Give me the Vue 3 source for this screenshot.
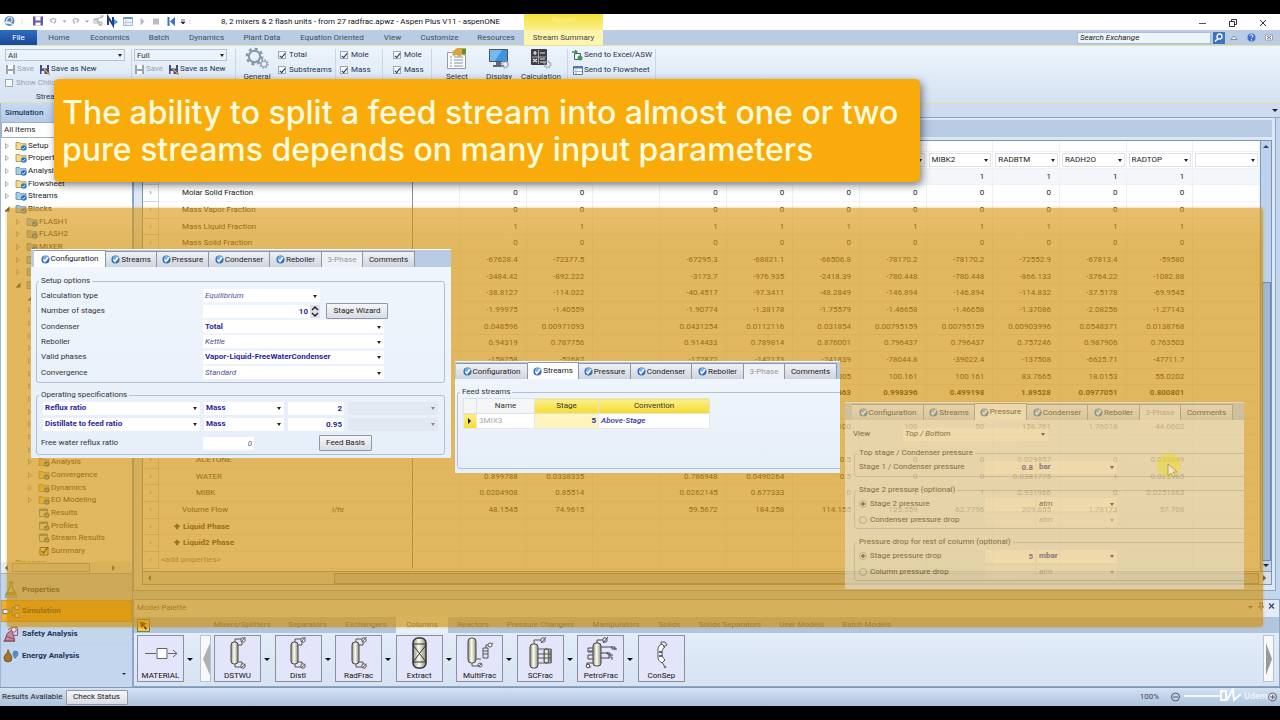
<script setup>
const ribbonTabs = ['Home', 'Economics', 'Batch', 'Dynamics', 'Plant Data', 'Equation Oriented', 'View', 'Customize', 'Resources', 'Stream Summary']

const tree = [
  { n: 'Setup', l: 0, x: 'c', i: 'folder' },
  { n: 'Properties', l: 0, x: 'c', i: 'folder' },
  { n: 'Analysis', l: 0, x: 'c', i: 'bluefolder' },
  { n: 'Flowsheet', l: 0, x: 'c', i: 'folder' },
  { n: 'Streams', l: 0, x: 'c', i: 'bluefolder' },
  { n: 'Blocks', l: 0, x: 'o', i: 'bluefolder' },
  { n: 'FLASH1', l: 1, x: 'c', i: 'bluefolder' },
  { n: 'FLASH2', l: 1, x: 'c', i: 'bluefolder' },
  { n: 'MIXER', l: 1, x: 'c', i: 'bluefolder' },
  { n: '', l: 1, x: 'c', i: 'bluefolder' },
  { n: '', l: 1, x: 'c', i: 'bluefolder' },
  { n: '', l: 1, x: 'o', i: 'bluefolder' },
  { n: '', l: 2, x: 'o', i: 'folder' },
  ...Array.from({ length: 12 }, () => ({ n: '', l: 2, x: 'c', i: 'folder' })),
  { n: 'Analysis', l: 2, x: 'c', i: 'folder' },
  { n: 'Convergence', l: 2, x: 'c', i: 'folder' },
  { n: 'Dynamics', l: 2, x: 'c', i: 'folder' },
  { n: 'EO Modeling', l: 2, x: 'c', i: 'folder' },
  { n: 'Results', l: 2, x: '', i: 'form' },
  { n: 'Profiles', l: 2, x: '', i: 'form' },
  { n: 'Stream Results', l: 2, x: '', i: 'form' },
  { n: 'Summary', l: 2, x: '', i: 'summary' },
  { n: 'Utilities', l: 0, x: '', i: 'folder' }
]

const nav = [
  { n: 'Properties', i: 'flask' },
  { n: 'Simulation', i: 'flow', on: true },
  { n: 'Safety Analysis', i: 'safety' },
  { n: 'Energy Analysis', i: 'energy' }
]

const streams = ['', '', '', '', '', '', '', 'MIBK2', 'RADBTM', 'RADH2O', 'RADTOP', '']
const same = v => [v, v, '', v, v, v, v, v, v, v, v, '']
const vals = s => {
  const v = s.split(' ')
  return [v[0], v[1], '', ...v.slice(2), '']
}
const late = s => ['', '', '', '', '', ...s.split(' '), '']
const rows = [
  { n: '', v: same('1'), tint: true },
  { n: 'Molar Solid Fraction', v: same('0') },
  { n: 'Mass Vapor Fraction', v: same('0') },
  { n: 'Mass Liquid Fraction', v: same('1') },
  { n: 'Mass Solid Fraction', v: same('0') },
  { n: '', v: vals('-67628.4 -72377.5 -67295.3 -68821.1 -66506.8 -78170.2 -78170.2 -72552.9 -67813.4 -59580') },
  { n: '', v: vals('-3484.42 -892.222 -3173.7 -976.935 -2418.39 -780.448 -780.448 -866.133 -3764.22 -1082.88') },
  { n: '', v: vals('-38.8127 -114.022 -40.4517 -97.3411 -48.2849 -146.894 -146.894 -114.832 -37.5178 -69.9545') },
  { n: '', v: vals('-1.99975 -1.40559 -1.90774 -1.38178 -1.75579 -1.46658 -1.46658 -1.37086 -2.08256 -1.27143') },
  { n: '', v: vals('0.048596 0.00971093 0.0431254 0.0112116 0.031854 0.00795159 0.00795159 0.00903996 0.0548371 0.0138768') },
  { n: '', v: vals('0.94319 0.787756 0.914433 0.789814 0.876001 0.796437 0.796437 0.757246 0.987906 0.763503') },
  { n: '', v: vals('-158258 -52687 -172872 -142173 -241839 -78044.8 -39022.4 -137508 -6625.71 -47711.7') },
  { n: '', v: late('005 100.161 100.161 83.7665 18.0153 55.0202') },
  { n: '', v: late('463 0.998396 0.499198 1.89528 0.0977051 0.800801'), bold: true },
  { n: '', v: [] },
  { n: '', v: late('100 100 50 158.761 1.76018 44.0602') },
  { n: '', v: [] },
  { n: 'ACETONE', sub: true, v: late('0.5 0 0 0.029857 0 0.033049') },
  { n: 'WATER', sub: true, v: vals('0.899788 0.0338335 0.786948 0.0490264 0.5 0 0 0.0381775 1 0.023965') },
  { n: 'MIBK', sub: true, v: vals('0.0204908 0.85514 0.0262145 0.677333 0 1 1 0.931966 0 0.0251863') },
  { n: 'Volume Flow', u: 'l/hr', v: vals('48.1545 74.9615 59.5672 184.258 114.155 125.559 62.7796 209.655 1.78173 57.708') },
  { n: 'Liquid Phase', plus: true, v: [] },
  { n: 'Liquid2 Phase', plus: true, v: [] },
  { n: '<add properties>', add: true, v: [] }
]

const formTabs = ['Configuration', 'Streams', 'Pressure', 'Condenser', 'Reboiler', '3-Phase', 'Comments']
const setup = [
  { n: 'Condenser', v: 'Total', b: true },
  { n: 'Reboiler', v: 'Kettle' },
  { n: 'Valid phases', v: 'Vapor-Liquid-FreeWaterCondenser', b: true },
  { n: 'Convergence', v: 'Standard' }
]
const specs = [
  { n: 'Reflux ratio', v: '2' },
  { n: 'Distillate to feed ratio', v: '0.95' }
]
const drops = [
  {
    t: 'Stage 2 pressure (optional)', g: 'stage2',
    r: [{ n: 'Stage 2 pressure', v: '', u: 'atm', on: true }, { n: 'Condenser pressure drop', v: '', u: 'atm' }]
  },
  {
    t: 'Pressure drop for rest of column (optional)', g: 'rest',
    r: [{ n: 'Stage pressure drop', v: '5', u: 'mbar', on: true, b: true }, { n: 'Column pressure drop', v: '', u: 'atm' }]
  }
]

const paletteTabs = ['Mixers/Splitters', 'Separators', 'Exchangers', 'Columns', 'Reactors', 'Pressure Changers', 'Manipulators', 'Solids', 'Solids Separators', 'User Models', 'Batch Models']
const models = ['DSTWU', 'Distl', 'RadFrac', 'Extract', 'MultiFrac', 'SCFrac', 'PetroFrac', 'ConSep']
</script>

<template>
  <div class="app">
    <svg class="defs" aria-hidden="true">
      <defs>
        <linearGradient id="steel"><stop offset="0" stop-color="#8f9080" /><stop offset=".45" stop-color="#fffff0" /><stop offset="1" stop-color="#8b8c7c" /></linearGradient>
      </defs>
      <symbol id="check" viewBox="0 0 10 10"><circle cx="5" cy="5" r="4.5" fill="#2f6fbd" /><circle cx="5" cy="3.6" r="2.8" fill="#78aee6" /><path d="M2.6 5 4.4 7.2 8 2.2" fill="none" stroke="#fff" stroke-width="1.6" /></symbol>
      <symbol id="folder" viewBox="0 0 12 10"><path d="M1 1.5h3.5l1 1.2H11V8.500H1z" fill="#f3d988" stroke="#a98f4c" stroke-width=".8" /><circle cx="8.800" cy="7" r="2.800" fill="#2b74c4" /><path d="M7.400 7l1 1.200 1.800-2.400" fill="none" stroke="#fff" stroke-width=".8" /></symbol>
      <symbol id="bluefolder" viewBox="0 0 12 10"><path d="M1 1.500h3.500l1 1.200H11V8.500H1z" fill="#a5cdea" stroke="#5f87a8" stroke-width=".8" /><circle cx="8.800" cy="7" r="2.800" fill="#2b74c4" /><path d="M7.400 7l1 1.200 1.800-2.400" fill="none" stroke="#fff" stroke-width=".8" /></symbol>
      <symbol id="form" viewBox="0 0 12 10"><path d="M1.500 1h8v7.500h-8z" fill="#eef5fb" stroke="#56789a" stroke-width=".8" /><path d="M1.500 2h8" stroke="#56789a" stroke-width="1.500" /><circle cx="8.800" cy="7" r="2.800" fill="#56789a" /><path d="M7.400 7l1 1.200 1.800-2.400" fill="none" stroke="#fff" stroke-width=".8" /></symbol>
      <symbol id="summary" viewBox="0 0 12 10"><path d="M2 1.500h8V9H2z" fill="#fff6b0" stroke="#4a4a20" /><path d="M3.500 5l2 2L10 1" fill="none" stroke="#222" stroke-width="1.300" /></symbol>
      <symbol id="disk" viewBox="0 0 11 11"><path d="M1 1h9v9H1z" fill="currentColor" /><path d="M3 1h5v4H3zM3 7h5v3H3z" fill="#fff" /></symbol>
      <symbol id="diskas" viewBox="0 0 11 11"><path d="M1 1h9v9H1z" fill="#46489c" /><path d="M3 1h5v3.500H3zM2.500 7h3v3h-3z" fill="#e8eefb" /><path d="M4 5l5 5 1.500.5-.5-1.500-5-5z" fill="#e8b43c" stroke="#6b4b12" stroke-width=".4" /></symbol>
      <symbol id="gear" viewBox="0 0 12 12"><circle cx="6" cy="6" r="3.600" fill="none" stroke="currentColor" stroke-width="1.200" /><circle cx="6" cy="6" r="4.900" fill="none" stroke="currentColor" stroke-width="1.400" stroke-dasharray="1.900 1.950" /></symbol>
      <symbol id="flask" viewBox="0 0 14 16"><path d="M5 1h4M6 1v5L2 13h10L8 6V1" fill="#cfe6c6" stroke="#6a7a5a" /><path d="M3.500 10h7l1.500 3H2z" fill="#86a860" /><path d="M1 15h12" stroke="#7b8a9a" /></symbol>
      <symbol id="flow" viewBox="0 0 18 16"><path d="M1 6h6v4H1zM13 2h4v4h-4zM13 10h4v4h-4z" fill="#f4f4f4" stroke="#777" /><path d="M7 8h3V4h3M10 8v4h3" fill="none" stroke="#777" /></symbol>
      <symbol id="safety" viewBox="0 0 18 18"><path d="M5 9l5-4 1 4 2 8H2z" fill="#c58b9a" stroke="#7a4257" /><path d="M6 5l5-3h4l1 2v7h-4M4 12l8 3M1 17h12" fill="none" stroke="#8a4a60" /><circle cx="12" cy="5" r="2.500" fill="#f3e6ea" stroke="#8a4a60" stroke-width=".8" /></symbol>
      <symbol id="energy" viewBox="0 0 18 16"><path d="M6 2c1 4 4 5 4 8.500a4 4 0 0 1-8 0C2 7 6 6 6 2z" fill="#a87326" stroke="#4c3a1a" stroke-width=".6" /><path d="M13 13c-1-3-3-4-3-7a3.500 3.500 0 0 1 7 0c0 3-3 4-4 7z" fill="#4d8fc8" stroke="#fff" stroke-width=".6" /></symbol>
      <symbol id="still" viewBox="0 0 30 34">
        <rect x="8" y="6" width="7" height="22" rx="3" fill="url(#steel)" stroke="#444" />
        <path d="M12 6V3h7M19 3v6h-4M12 28v3h7M15 26h4v3" fill="none" stroke="#555" />
        <circle cx="20" cy="4" r="2.200" fill="#fff" stroke="#555" /><circle cx="20" cy="30" r="2.200" fill="#fff" stroke="#555" /><path d="M18 6l4.500-5M18 32l4.500-4" stroke="#555" />
      </symbol>
      <symbol id="DSTWU" viewBox="0 0 30 34"><use href="#still" /></symbol>
      <symbol id="Distl" viewBox="0 0 30 34"><use href="#still" /></symbol>
      <symbol id="RadFrac" viewBox="0 0 30 34"><use href="#still" /></symbol>
      <symbol id="Extract" viewBox="0 0 30 34"><rect x="9" y="2" width="13" height="30" rx="5" fill="url(#steel)" stroke="#333" stroke-width="1.500" /><path d="M9 8h13M9 26h13M9 9l13 17M22 9L9 26" fill="none" stroke="#333" /></symbol>
      <symbol id="MultiFrac" viewBox="0 0 30 34"><rect x="3" y="2" width="8" height="25" rx="3.500" fill="url(#steel)" stroke="#444" /><path d="M7 27v3h6M11 23h5M18 12h5v10h-5zM18 15h5M18 18h5M21 12V9h4l3-2" fill="none" stroke="#555" /><circle cx="25" cy="9" r="2" fill="#fff" stroke="#555" /><circle cx="15" cy="29" r="2" fill="#fff" stroke="#555" /><path d="M13 31l4-4" stroke="#555" /></symbol>
      <symbol id="SCFrac" viewBox="0 0 30 34"><rect x="5" y="8" width="8" height="24" rx="3" fill="url(#steel)" stroke="#444" /><rect x="19" y="13" width="5" height="14" rx="2" fill="url(#steel)" stroke="#444" /><path d="M9 8V4h8M13 13h13v14H13M13 18h13M13 22h13M26 13v14" fill="none" stroke="#555" /><circle cx="18" cy="4" r="2.200" fill="#fff" stroke="#555" /><path d="M16 7l5-6" stroke="#555" /></symbol>
      <symbol id="PetroFrac" viewBox="0 0 34 34"><rect x="9" y="7" width="8" height="23" rx="3" fill="url(#steel)" stroke="#444" /><path d="M13 7V4h8M17 11h11v2h5M17 17h7v2h5M17 22h9M9 12H4v4h5M9 19H4v4h5M9 27H3v4h4M9 15H5" fill="none" stroke="#444" /><circle cx="21" cy="4" r="2.200" fill="#fff" stroke="#444" /><path d="M19 7l5-6M27 11h4v3M22 17h4v3M24 21h4v3" fill="none" stroke="#444" /><circle cx="4" cy="30" r="1.800" fill="#fff" stroke="#444" /></symbol>
      <symbol id="ConSep" viewBox="0 0 30 34"><path d="M12 13c0-3 2-4 4-5l3 3c-2 1-3 3-3 6s1 5 3 7l-3 3c-3-2-4-3-4-6z" fill="#fff" stroke="#555" /><path d="M15 9V6h4l2 3-4 2M16 26l3 5" fill="none" stroke="#555" /><path d="M13 16h3M13 20h3" stroke="#336" stroke-width="1.500" /><circle cx="19" cy="31" r="1.300" fill="#777" /></symbol>
    </svg>

    <header class="titlebar">
      <svg class="qat" width="221" height="16" viewBox="0 0 221 16">
        <circle cx="9.500" cy="7" r="5" fill="#5b86b4" /><path d="M6 10c0-4 2-7 4-7s3 4 1 5-3-1-5 0 6 1 8 3" fill="none" stroke="#e8f1fa" stroke-width="1.200" />
        <path d="M22 5v5M190 5v5" stroke="#ddd" />
        <path d="M33 2.500h10v9H33z" fill="#6b5aa6" /><path d="M35.500 2.500h5v4h-5zM35.500 8.500h5v3h-5z" fill="#fff" />
        <path d="M50 6l2.500 2.500M50 6l3-1.500c3 0 4 2 1 5M79 6l-2.500 2.500M79 6l-3-1.500c-3 0-4 2-1 5" fill="none" stroke="#aaa" stroke-width="1.200" />
        <path d="M62.500 6.500h4l-2 2zM85 6.500h4l-2 2z" fill="#999" />
        <path d="M95 6l4-2 4-1M95 6l5 3v3M94 5h4v4h-4zM100 2h4M99 8h3v3h-3z" fill="none" stroke="#aaa" />
        <path d="M108 11V3l5 8V3" fill="none" stroke="#1d3f8a" stroke-width="2" /><path d="M114 5l4 3-4 3z" fill="#3ba0dc" />
        <path d="M123.500 3.500h9v8h-9z" fill="#eef4fb" stroke="#9ab4d2" /><path d="M123.500 4h9" stroke="#6e95c4" stroke-width="2" /><path d="M126 6v5M123.500 8.500h9" stroke="#b4c8de" />
        <path d="M140.500 3.500l4 4-4 4z" fill="#bcbcbc" /><path d="M153 4.500h6v6h-6z" fill="#bcbcbc" />
        <path d="M168.500 3v9" stroke="#3d74ba" stroke-width="2" /><path d="M175 3v9l-5-4.500z" fill="#3d74ba" />
        <path d="M181 6h4M181 8h4l-2 2z" fill="#222" stroke="#222" stroke-width=".7" />
      </svg>
      <h1>8, 2 mixers &amp; 2 flash units - from 27 radfrac.apwz - Aspen Plus V11 - aspenONE</h1>
      <span class="context">Report</span>
      <div class="winbtns">
        <button aria-label="Minimize"><svg width="8" height="8"><path d="M0 4.500h7" stroke="#555" /></svg></button>
        <button aria-label="Restore"><svg width="8" height="8"><path d="M.5 2.500h5v5h-5zM2.500 2V.5h5v5H6" fill="none" stroke="#333" /></svg></button>
        <button aria-label="Close"><svg width="8" height="8"><path d="M1 1l6 6M7 1L1 7" stroke="#333" /></svg></button>
      </div>
    </header>

    <nav class="ribbontabs">
      <button class="file">File</button>
      <button v-for="t in ribbonTabs" :key="t" :class="{ active: t === 'Stream Summary' }">{{ t }}</button>
      <div class="search">
        <input type="text" value="Search Exchange" aria-label="Search Exchange">
        <button aria-label="Search" class="find"><svg width="11" height="11"><circle cx="6.500" cy="4.500" r="2.500" fill="none" stroke="#fff" stroke-width="1.300" /><path d="M5 6.500L2 9.500" stroke="#fff" stroke-width="1.500" /></svg></button>
        <svg width="46" height="11"><path d="M4 7.500l3-3.500 3 3.500z" fill="#fff" stroke="#668" stroke-width=".7" /><circle cx="24.500" cy="5.500" r="4" fill="#3f6fd0" /><path d="M23 4c0-2 3.500-1.500 3 .5l-1.500 1.300M24.500 7.300v1.200" fill="none" stroke="#fff" /><path d="M38.500 3h7v5h-7z" fill="#fff" stroke="#889" stroke-width=".7" /><path d="M40 4l4 3M44 4l-4 3" stroke="#667" /></svg>
      </div>
    </nav>

    <section class="ribbon">
      <div class="group g1">
        <span class="combo"><select aria-label="Template"><option>All</option></select></span>
        <div class="line"><button class="dim"><svg class="ic"><use href="#disk" /></svg>Save</button><button><svg class="ic"><use href="#diskas" /></svg>Save as New</button></div>
        <label class="dim chk"><input type="checkbox">Show Child</label>
        <span class="caption">Stream</span>
      </div>
      <div class="group g2">
        <span class="combo"><select aria-label="Columns"><option>Full</option></select></span>
        <div class="line"><button class="dim"><svg class="ic"><use href="#disk" /></svg>Save</button><button><svg class="ic"><use href="#diskas" /></svg>Save as New</button></div>
      </div>
      <div class="group g3">
        <button class="big"><svg width="26" height="24" color="#8493a8"><use href="#gear" x="1" y="0" width="19" height="19" /><use href="#gear" x="15" y="12" width="10" height="10" /></svg>General</button>
        <div class="checks"><label class="chk"><input type="checkbox" checked>Total</label><label class="chk"><input type="checkbox" checked>Substreams</label></div>
      </div>
      <div class="group g4"><label class="chk"><input type="checkbox" checked>Mole</label><label class="chk"><input type="checkbox" checked>Mass</label></div>
      <div class="group g5"><label class="chk"><input type="checkbox" checked>Mole</label><label class="chk"><input type="checkbox" checked>Mass</label></div>
      <div class="group g6">
        <button class="big"><svg width="24" height="24"><path d="M2.500 5.500h18v16h-18z" fill="#fbfcfe" stroke="#99a" /><path d="M5 10h2M9 10h9M5 13h2M9 13h9M5 16h2M9 16h9M5 19h2M9 19h9" stroke="#7d93b8" /><path d="M7 5l5-4h9v8l-4-1-3 2-2-2-4 1z" fill="#d9a441" /><path d="M17 2h4v5h-4z" fill="#4d9a43" /></svg>Select</button>
        <button class="big"><svg width="24" height="24"><path d="M2.500 2.500h18v12h-18z" fill="#3f93e0" stroke="#456" /><path d="M3 3h12l-7 11H3z" fill="#74b9f2" /><path d="M9 15h5v3H9zM6 18h11v2H6z" fill="#667" /><g color="#9aa4b2"><use href="#gear" x="13" y="13" width="10" height="9" /></g></svg>Display</button>
        <button class="big"><svg width="24" height="24"><rect x="2" y="2" width="16" height="16" rx="1" fill="#3c3c44" /><path d="M4 6h4M6 4v4M11 6h5M4 12l4 3M8 12l-4 3M11 12h5M11 15h5" stroke="#eee" stroke-width="1.200" /><path d="M9.500 3v14M3 10h14" stroke="#aaa" /><g color="#9aa4b2"><use href="#gear" x="14" y="13" width="9" height="9" /></g></svg>Calculation</button>
      </div>
      <div class="group g7">
        <button><svg width="11" height="11"><path d="M2.500 3.500h6v6h-6z" fill="#eef4fb" stroke="#557" /><path d="M0 2h5M3 0l2 2-2 2" fill="none" stroke="#3a8f45" stroke-width="1.300" /><circle cx="8" cy="8" r="2.500" fill="#3a9a55" /></svg>Send to Excel/ASW</button>
        <button><svg width="11" height="11"><path d="M1.500 1.500h9v8h-9z" fill="#fff" stroke="#5577b0" /><path d="M1 2.500h10" stroke="#5577b0" stroke-width="2" /><path d="M4 3v6M1 6.500h9" stroke="#9db4d8" /></svg>Send to Flowsheet</button>
      </div>
    </section>

    <main class="work">
      <aside class="side">
        <h2>Simulation</h2>
        <div class="allitems">All Items</div>
        <div class="treeview">
          <ul class="tree">
            <li v-for="(t, k) in tree" :key="k" :class="'lv' + t.l">
              <svg class="exp" viewBox="0 0 6 8"><path v-if="t.x === 'c'" d="M1.500 1.500v5l3-2.500z" fill="none" stroke="#999" stroke-width=".8" /><path v-if="t.x === 'o'" d="M5.500 1.500v5h-5z" fill="#333" /></svg>
              <svg class="ti"><use :href="'#' + t.i" /></svg>{{ t.n }}
            </li>
          </ul>
        </div>
        <div class="hbar"><i class="arr l"></i><i class="thumb"></i><i class="arr r"></i></div>
        <button v-for="n in nav" :key="n.n" class="navbtn" :class="{ on: n.on }"><svg width="18" height="17"><use :href="'#' + n.i" /></svg>{{ n.n }}</button>
        <div class="more"><i class="down"></i></div>
      </aside>

      <div class="content">
        <div class="docstrip"><i class="down"></i></div>
        <div class="frame">
          <div class="band"></div>
          <div class="gridbox">
            <div class="gridwrap">
              <table class="grid">
                <colgroup><col class="c0"><col class="c1"><col class="c2"><col class="c3"><col v-for="(s, k) in streams" :key="k"></colgroup>
                <thead>
                  <tr class="h1"><th v-for="k in 16" :key="k"></th></tr>
                  <tr class="h2"><th></th><th></th><th></th><th></th><th v-for="(s, k) in streams" :key="k"><span class="combo"><select :aria-label="'Stream ' + (k + 1)"><option>{{ s }}</option></select></span></th></tr>
                </thead>
                <tbody>
                  <tr v-for="(r, k) in rows" :key="k" :class="{ bold: r.bold, tint: r.tint }">
                    <th class="rh">›</th>
                    <td class="nm" :class="{ sub: r.sub, plus: r.plus, add: r.add }">{{ r.n }}</td>
                    <td class="un">{{ r.u }}</td>
                    <td></td>
                    <td v-for="(s, c) in streams" :key="c" class="num">{{ r.v[c] }}</td>
                  </tr>
                </tbody>
              </table>
              <div class="vbar"><i class="up"></i><i class="thumb"></i><i class="down"></i></div>
            </div>
            <div class="ghbar"><i class="arr l"></i><i class="gap"></i><i class="thumb"></i><i class="arr r"></i></div>
          </div>
        </div>

        <section class="palette">
          <div class="ptitle"><span>Model Palette</span><svg width="30" height="9"><path d="M2 4h5l-2.500 3z" fill="#567" /><path d="M13 1h4M14 1v4M16.500 1v4M12 5h6M15 5v3" stroke="#567" /><path d="M23 1.500l5 5M28 1.500l-5 5" stroke="#447" stroke-width="1.300" /></svg></div>
          <div class="ptabs">
            <button class="pick" aria-label="Pick"><svg width="11" height="11"><path d="M2 1.500l6.500 2-2.500 1.500 3 3.500-1.500 1L5 6 3.500 8z" fill="#222" stroke="#e33" stroke-width=".3" /></svg></button>
            <div class="tabcols"><button v-for="t in paletteTabs" :key="t" :class="{ on: t === 'Columns' }">{{ t }}</button></div>
          </div>
          <div class="models">
            <button class="model"><svg width="38" height="34"><path d="M3 17.500h11M26 17.500h9M31 14l4 3.500-4 3.500" fill="none" stroke="#666" /><path d="M15 12.500h10v10H15z" fill="#fff" stroke="#666" /></svg>MATERIAL</button>
            <i class="down big1"></i>
            <button class="scroll" aria-label="Scroll left"><svg width="8" height="32"><path d="M8 0v32L1 16z" fill="#b0b0b0" /></svg></button>
            <div class="items">
              <div v-for="(m, k) in models" :key="m" class="item"><button class="model"><svg width="34" height="34"><use :href="'#' + m" /></svg>{{ m }}</button><i v-if="k < 7" class="down"></i></div>
            </div>
            <button class="scroll end" aria-label="Scroll right"><svg width="8" height="32"><path d="M1 0v32l6-16z" fill="#999" /></svg></button>
          </div>
        </section>
      </div>
    </main>

    <footer class="status">
      <span>Results Available</span><button class="btn">Check Status</button>
      <span class="pct">100%</span>
      <svg width="113" height="18">
        <circle cx="8.500" cy="9" r="4" fill="none" stroke="#556" /><path d="M6 9h5" stroke="#556" />
        <path d="M17 8h37" stroke="#fff" stroke-width="1.500" />
        <path d="M54 3h5v9h-5zM60 12l6-11 1 11 7-6" fill="none" stroke="#fff" stroke-width="2" opacity=".9" />
        <text x="77" y="11" fill="#fff" font-size="9" font-weight="bold" opacity=".7">Udemy</text>
        <circle cx="105.500" cy="9" r="4" fill="none" stroke="#667" /><path d="M103 9h5M105.500 7v4" stroke="#667" />
      </svg>
    </footer>

    <div class="veil"></div>

    <section class="form f1">
      <div class="ftabs"><button v-for="(t, k) in formTabs" :key="t" :class="{ on: k === 0, off: k === 5 }"><svg v-if="k < 5" width="9" height="9"><use href="#check" /></svg>{{ t }}</button></div>
      <fieldset class="fs setup">
        <legend>Setup options</legend>
        <div class="row"><label for="ct">Calculation type</label><span class="combo w1"><select id="ct"><option>Equilibrium</option></select></span></div>
        <div class="row"><label for="ns">Number of stages</label><span class="w1 spin"><input id="ns" class="b" type="text" value="10"><svg width="10" height="13"><path d="M2 5l3-3 3 3M2 8l3 3 3-3" fill="none" stroke="#223" stroke-width="1.500" /></svg></span><button class="btn wiz">Stage Wizard</button></div>
        <div v-for="s in setup" :key="s.n" class="row"><label :for="s.n">{{ s.n }}</label><span class="combo w2"><select :id="s.n" :class="{ b: s.b }"><option>{{ s.v }}</option></select></span></div>
      </fieldset>
      <fieldset class="fs oper">
        <legend>Operating specifications</legend>
        <div v-for="s in specs" :key="s.n" class="srow">
          <span class="combo"><select class="b" aria-label="Specification"><option>{{ s.n }}</option></select></span>
          <span class="combo"><select class="b" aria-label="Basis"><option>Mass</option></select></span>
          <input class="b" type="text" :value="s.v" :aria-label="s.n">
          <span class="combo dis"><select disabled aria-label="Units"><option></option></select></span>
        </div>
        <div class="row last"><label for="fw">Free water reflux ratio</label><input id="fw" class="w0" type="text" value="0"><button class="btn">Feed Basis</button></div>
      </fieldset>
    </section>

    <section class="form f2">
      <div class="ftabs"><button v-for="(t, k) in formTabs" :key="t" :class="{ on: k === 1, off: k === 5 }"><svg v-if="k < 5" width="9" height="9"><use href="#check" /></svg>{{ t }}</button></div>
      <fieldset class="fs feed">
        <legend>Feed streams</legend>
        <table>
          <thead><tr><th class="t0"></th><th class="t1">Name</th><th class="t2 y">Stage</th><th class="t3 y">Convention</th></tr></thead>
          <tbody><tr><td class="y mark"><i class="play"></i></td><td class="gray">3MIX3</td><td class="stage">5</td><td class="conv">Above-Stage</td></tr></tbody>
        </table>
      </fieldset>
    </section>

    <section class="form f3">
      <div class="ftabs"><button v-for="(t, k) in formTabs" :key="t" :class="{ on: k === 2, off: k === 5 }"><svg v-if="k < 5" width="9" height="9"><use href="#check" /></svg>{{ t }}</button></div>
      <div class="view"><label for="vw">View</label><span class="combo"><select id="vw"><option>Top / Bottom</option></select></span></div>
      <fieldset class="fs top">
        <legend>Top stage / Condenser pressure</legend>
        <div class="prow"><label for="s1">Stage 1 / Condenser pressure</label><input id="s1" class="b" type="text" value="0.8"><span class="combo"><select class="b" aria-label="Pressure units"><option>bar</option></select></span></div>
      </fieldset>
      <fieldset v-for="d in drops" :key="d.g" class="fs">
        <legend>{{ d.t }}</legend>
        <div v-for="r in d.r" :key="r.n" class="prow" :class="{ faint: !r.on }"><label><input type="radio" :name="d.g" :checked="r.on">{{ r.n }}</label><input class="b" type="text" :value="r.v" :aria-label="r.n"><span class="combo"><select :class="{ b: r.b }" :aria-label="r.n + ' units'"><option>{{ r.u }}</option></select></span></div>
      </fieldset>
    </section>

    <svg class="cursor" width="30" height="30"><circle cx="13" cy="13" r="12" fill="#f2dc1c" opacity=".5" /><path d="M12 12v12l3-3 2 4 2-1-2-4h4z" fill="#f4ecc8" stroke="#a08c50" stroke-width=".8" /></svg>

    <div class="callout">The ability to split a feed stream into almost one or two<br>pure streams depends on many input parameters</div>
  </div>
</template>

<style>
body { background: #000; }
</style>

<style scoped>
* { box-sizing: border-box; }
.app { position: relative; display: flex; flex-direction: column; min-height: 100vh; padding: 14px 0; background: #000; font: 8px/12px Roboto, "Noto Sans", sans-serif; color: #222; overflow: hidden; }
.defs { position: absolute; width: 0; height: 0; }
svg { flex: none; display: block; }
button, input, select { font: inherit; color: inherit; margin: 0; padding: 0; border: 0; border-radius: 0; background: none; outline: 0; white-space: nowrap; min-width: 0; }
h1, h2, ul { margin: 0; padding: 0; font: inherit; list-style: none; }
i { flex: none; display: block; }
.up, .down, .arr, .play { width: 0; height: 0; border: 3px solid transparent; }
.down { border-top-color: #223; border-bottom: 0; }
.up { border-bottom-color: #345; border-top: 0; }
.arr.l { border-right-color: #555; border-left: 0; }
.arr.r, .play { border-left-color: #555; border-right: 0; }
.combo { position: relative; display: flex; }
.combo select { width: 100%; appearance: none; padding: 0 10px 0 2px; }
.combo::after { content: ""; position: absolute; right: 3px; top: 50%; margin-top: -1px; border: 2px solid transparent; border-top: 3px solid #222; border-bottom: 0; pointer-events: none; }

.titlebar { display: flex; height: 16px; background: #fff; }
.qat { width: 221px; }
.qat + h1 { width: 303px; line-height: 16px; font-size: 8px; color: #111; white-space: nowrap; }
.context { width: 79px; text-align: center; background: linear-gradient(#f6e23a, #fbef8a); color: #fbee90; }
.winbtns { margin-left: auto; display: flex; gap: 22px; padding: 5px 13px 0 0; }
.winbtns button { width: 8px; height: 8px; }

.ribbontabs { display: grid; grid-template-columns: 37px 44px 58px 40px 55px 56px 84px 37px 57px 56px 79px 1fr; height: 16px; background: #bacce4; border-bottom: 1px solid #e6e3a0; color: #444b5c; }
.ribbontabs .file { background: linear-gradient(#2f6dbd, #17479b); color: #fff; }
.ribbontabs .active { background: #fdf4ad; color: #444; }
.search { display: flex; gap: 2px; justify-content: flex-end; align-items: center; padding-right: 7px; }
.search input { width: 134px; height: 12px; padding: 0 2px; background: #eef4fb; border: 1px solid #a9bedb; font-style: italic; color: #222; }
.find { width: 12px; height: 12px; background: #3b75bd; }

.ribbon { display: flex; height: 57px; padding-top: 3px; background: linear-gradient(#edf4fc, #d5e2f2); border-bottom: 1px solid #e6e3a0; color: #26354d; }
.group { display: flex; flex-direction: column; gap: 2px; border-right: 1px solid #c9d6e6; }
.group > .combo select { height: 12px; border: 1px solid #b4c2d4; background: #eaf2fb; color: #333; }
.g1 { width: 132px; padding: 0 6px 0 5px; }
.g2 { width: 104px; padding: 0 8px 0 2px; }
.line { display: flex; gap: 5px; }
.line button { display: flex; align-items: center; gap: 1px; height: 12px; }
.line .dim, .dim { color: #9aa4b2; }
.ic { width: 11px; height: 11px; }
.chk { display: flex; align-items: center; gap: 3px; height: 12px; }
.chk input { appearance: none; width: 8px; height: 8px; border: 1px solid #9aa8b8; background: #f6f9fc; display: flex; justify-content: center; }
.chk input:checked::after { content: ""; width: 2px; height: 5px; border: solid #234; border-width: 0 1px 1px 0; rotate: 40deg; }
.caption { padding-left: 31px; white-space: nowrap; overflow: hidden; }
.group.g3 { width: 100px; flex-direction: row; padding-left: 7px; gap: 7px; }
.checks { display: flex; flex-direction: column; gap: 3px; }
.g4, .g5, .g7 { gap: 3px; }
.g4 { width: 47px; padding-left: 4px; }
.g5 { width: 49px; padding-left: 10px; }
.group.g6 { width: 136px; flex-direction: row; gap: 0; padding-left: 4px; }
.big { display: flex; flex-direction: column; align-items: center; height: 38px; margin-top: -2px; }
.g3 .big { width: 28px; }
.g6 .big { width: 42px; }
.g7 { width: 88px; padding-left: 4px; }
.g7 button { display: flex; align-items: center; gap: 1px; height: 12px; }

.work { flex: 1; display: flex; background: #c4d6ee; }
.side { width: 133px; flex: none; display: flex; flex-direction: column; border-left: 1px solid #9fb4cf; border-right: 1px solid #8ea6c4; }
.side h2 { height: 19px; padding: 4px 0 0 4px; font-weight: 500; color: #1f365c; background: linear-gradient(#c7daf2, #b4cae6); }
.allitems { height: 16px; padding: 1px 2px; background: #fff; border: 1px solid #9db0c8; }
.treeview { flex: 1 1 0px; min-height: 0; overflow: hidden; background: #fff; }
.tree { padding-top: 1px; }
.tree li { display: flex; align-items: center; height: 13px; line-height: 12px; white-space: nowrap; color: #222; }
.tree li:nth-child(3n+2) { height: 12px; }
.exp { width: 6px; height: 8px; margin-right: 5px; }
.ti { width: 12px; height: 10px; margin-right: 1px; }
.lv0 { padding-left: 3px; }
.lv1 { padding-left: 14px; }
.lv2 { padding-left: 26px; }
.hbar { display: flex; align-items: center; height: 12px; margin-bottom: 4px; padding: 0 4px; background: #e8edf4; border-bottom: 1px solid #9db0c8; }
.hbar .thumb { width: 78px; height: 9px; margin: 0 22px 0 4px; background: #dde4ee; border: 1px solid #99a6b8; }
.navbtn { display: flex; align-items: center; gap: 2px; height: 22px; padding-left: 1px; font-weight: 700; color: #1c3157; border-top: 1px solid #c0d2ea; }
.navbtn.on { background: #f7ae2a; border: 1px solid #c99b42; padding-left: 0; color: #333; }
.more { height: 21px; padding: 7px 0 0 121px; }
.more .down { border-width: 2px; border-bottom: 0; }

.content { flex: 1; min-width: 0; display: flex; flex-direction: column; }
.docstrip { height: 15px; display: flex; align-items: center; justify-content: flex-end; padding-right: 2px; background: #cfdcef; border-bottom: 1px solid #8ea6c4; }
.frame { flex: 1; display: flex; flex-direction: column; margin-right: 4px; padding: 2px 3px 3px 4px; border: 1px solid #8ea6c4; border-top: 0; background: #dce8f6; }
.band { height: 17px; background: #b9cbe4; }
.gridbox { flex: 1; margin: 3px 0 2px 4px; border: 1px solid #8094ae; background: #fff; display: flex; flex-direction: column; }
.gridwrap { flex: 1; display: flex; }
.grid { flex: 1; min-width: 0; width: 0; align-self: flex-start; table-layout: fixed; border-collapse: separate; border-spacing: 0; line-height: 12px; }
.c0 { width: 16px; }
.c1 { width: 173px; }
.c2 { width: 81px; }
.c3 { width: 47px; }
.grid th, .grid td { padding: 0; font-weight: 400; border-right: 1px solid #edf0f4; border-bottom: 1px solid #f0f2f5; white-space: nowrap; overflow: hidden; }
.grid td:nth-child(2) { border-right: 0; }
.grid td:nth-child(3) { border-right-color: #889; }
.h1 { height: 11px; }
.h2 { height: 17px; }
.h2 .combo { margin: 0 1px 0 2px; }
.h2 select { height: 14px; border: 1px solid #dde2e8; color: #222; }
.grid tbody tr { height: 17px; }
.grid tbody tr:nth-child(3n+1) { height: 16px; }
.grid .rh { color: #777; border-color: #cfd6df; }
.tint { background: #f2f7fc; }
.grid .nm { padding-left: 23px; text-align: left; }
.grid .nm.sub { padding-left: 37px; }
.grid .nm.plus { padding-left: 15px; font-weight: 700; }
.plus::before { content: "✚"; margin-right: 3px; font-size: 7px; }
.grid .nm.add { padding-left: 2px; color: #777; }
.un { padding-left: 2px; text-align: left; }
.grid .num { padding-right: 8px; text-align: right; }
.grid .bold td { font-weight: 700; }
.vbar { width: 11px; flex: none; display: flex; flex-direction: column; align-items: center; padding: 4px 0; background: #bdd2ec; border-left: 1px solid #7f9abc; }
.vbar .thumb { width: 9px; flex: 1; margin: 134px 0 3px; background: #9fb8da; border: 1px solid #6d88ad; }
.ghbar { height: 13px; display: flex; align-items: center; padding: 0 5px; background: #d6dfea; border-top: 1px solid #8c9cb0; }
.ghbar .gap { width: 183px; }
.ghbar .thumb { flex: 1; height: 11px; margin-right: 4px; background: #c0cad8; border: 1px solid #8393a8; }

.palette { margin-top: 8px; border: 1px solid #8ea6c4; background: linear-gradient(#e9f2fc, #d6e3f2); display: flex; flex-direction: column; color: #4a5568; }
.ptitle { display: flex; justify-content: space-between; height: 17px; padding: 2px 3px 0; background: #e2ebf7; }
.ptabs { display: flex; height: 16px; background: #b3c4de; }
.pick { width: 13px; height: 13px; margin: 2px 55px 0 3px; background: #f3c84e; border: 1px solid #5a8c46; }
.tabcols { display: grid; grid-template-columns: 74px 57px 60px 52px 50px 85px 66px 41px 80px 63px 67px; }
.tabcols .on { background: #e9f0f9; }
.models { display: flex; height: 53px; padding: 2px 3px; }
.model { display: flex; flex-direction: column; align-items: center; justify-content: space-between; width: 47px; height: 47px; overflow: hidden; border: 1px solid #8a909c; background: #e3e6fa; color: #111; }
.models > .down, .item .down { align-self: center; margin-left: 3px; border-top-color: #111; }
.scroll { width: 11px; height: 47px; margin: 0 3px 0 7px; padding-left: 1px; background: #f6f8fb; border: 1px solid #b9c3cf; }
.items { flex: 0 0 471px; display: flex; justify-content: space-between; }
.item { width: 47px; display: flex; }
.item .model { flex: none; }
.scroll.end { margin: 0 2px 0 auto; }

.status { display: flex; align-items: center; height: 19px; padding-left: 2px; background: linear-gradient(#d3e2f3, #adc2db); border-top: 1px solid #7f98b8; }
.status .btn { width: 62px; margin-left: 3px; height: 15px; }
.btn { height: 16px; border: 1px solid #8d99a8; border-radius: 1px; background: linear-gradient(#f6f7f9, #d9dce2); color: #222; }
.pct { margin-left: auto; padding-right: 8px; color: #445; }

.veil { position: absolute; left: 7px; right: 17px; top: 208px; bottom: 93px; border-radius: 3px; background: linear-gradient(rgba(217, 152, 18, .62), rgba(209, 146, 11, .66) 10%); box-shadow: 0 0 3px rgba(209, 146, 11, .6); }

.form { position: absolute; background: linear-gradient(#f1f6fd, #e6eef9); color: #333; overflow: hidden; border-top: 1px solid #f6f8fb; }
.ftabs { display: grid; grid-template-columns: 72px 51px 52px 61px 52px 41px 52px; height: 17px; background: #b9cbe4; padding-left: 3px; }
.f2 .ftabs { padding-left: 1px; }
.ftabs button { display: flex; align-items: center; justify-content: center; gap: 1px; margin-top: 1px; border: 1px solid #8c96a6; border-width: 1px 1px 0 0; background: linear-gradient(#f0f1f5, #cfd4df); color: #222; }
.ftabs .on { background: #fbfdff; margin-top: 0; }
.ftabs .off { background: #eef1f6; color: #999; }
.fs { margin: 0; padding: 0; border: 1px solid #b3c0d2; border-radius: 3px; min-width: 0; }
.fs legend { margin-left: 2px; padding: 0 2px; line-height: 10px; }
.form .combo select, .form input[type="text"] { height: 13px; background: #fff; color: #51509a; font-style: italic; }
.form input[type="text"] { text-align: right; padding-right: 2px; }
.form .combo select.b, .form input[type="text"].b { font-weight: 700; font-style: normal; color: #2b1f9e; }
.f1 { left: 31px; top: 249px; width: 420px; height: 209px; }
.setup { margin: 9px 6px 0 5px; padding-top: 2px; height: 107px; }
.row { display: flex; align-items: center; height: 15px; padding-left: 4px; }
.setup .row:nth-child(3n) { height: 16px; }
.row label { width: 162px; flex: none; }
.w0 { width: 51px; }
.w1 { width: 117px; }
.w2 { width: 181px; }
.spin { display: flex; }
.spin input { flex: 1; }
.spin svg { background: #dfe1ea; }
.wiz { width: 62px; margin-left: 6px; }
.oper { margin: 7px 6px 0 5px; height: 65px; }
.srow { display: grid; grid-template-columns: 157px 80px 56px 90px; gap: 0 4px; height: 16px; align-items: center; padding-left: 6px; }
.dis { opacity: .5; }
.form .dis select { background: #dadbe6; }
.row.last { height: 22px; }
.last .btn { width: 53px; margin-left: 65px; }
.f2 { left: 455px; top: 361px; width: 385px; height: 112px; }
.feed { margin: 8px -4px 0 2px; height: 82px; padding-top: 1px; }
.feed table { table-layout: fixed; width: 247px; margin-left: 5px; border-collapse: collapse; background: #fff; }
.feed th { height: 15px; padding: 0; font-weight: 400; background: #f4f5f7; border: 1px solid #dfe1e4; }
.feed td { height: 15px; padding: 0 2px; border: 1px solid #e8e8ea; }
.feed .y { background: linear-gradient(#fbef8c, #f5dc2b); }
.t0 { width: 13px; }
.t1 { width: 58px; }
.t2 { width: 64px; }
.feed .mark { padding-left: 4px; }
.feed .play { border-left-color: #111; }
.gray { color: #aaa; }
.stage { text-align: right; background: #fdf5bd; font-weight: 700; color: #2b1f9e; }
.conv { font-style: italic; font-weight: 500; color: #3a359c; }
.f3 { left: 845px; top: 402px; width: 399px; height: 187px; opacity: .48; color: #111; }
.f3 .ftabs { padding-left: 7px; }
.view { display: flex; align-items: center; height: 25px; padding: 3px 0 0 8px; }
.view label { width: 50px; }
.view .combo { width: 145px; }
.f3 .fs { margin: 8px -4px 0 9px; padding-top: 1px; }
.f3 .fs.top { margin-top: 3px; padding-bottom: 1px; }
.prow { display: grid; grid-template-columns: 124px 50px 80px; gap: 0 2px; align-items: center; height: 16px; padding-left: 4px; }
.prow label { display: flex; align-items: center; gap: 3px; white-space: nowrap; }
.prow input[type="radio"] { appearance: none; width: 8px; height: 8px; border: 1px solid #9aa; border-radius: 50%; background: #eef; }
.prow input[type="radio"]:checked { background: radial-gradient(#334 35%, #eef 45%); }
.f3 .combo select:not(.b) { color: #222; }
.faint .combo, .faint input[type="text"] { opacity: .4; }
.cursor { position: absolute; left: 1156px; top: 452px; opacity: .9; }

.callout { position: absolute; left: 54px; top: 79px; width: 866px; height: 103px; padding: 15px 8px; border-radius: 5px; background: #f8ab0b; box-shadow: 2px 3px 8px rgba(0, 0, 0, .5); color: #fffbdc; font: 500 32px/37px Inter, "Open Sans", sans-serif; white-space: nowrap; }
</style>
